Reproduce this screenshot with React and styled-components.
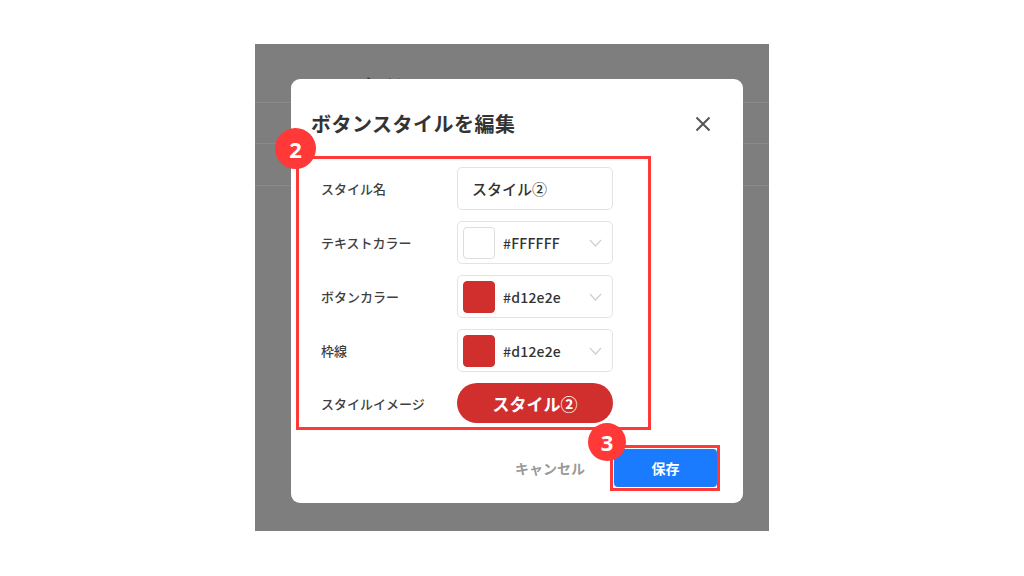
import React from "react";
import styled, { createGlobalStyle } from "styled-components";

const Global = createGlobalStyle`
  html, body { margin: 0; padding: 0; background: #ffffff; }
  body { font-family: "Noto Sans CJK JP", "Noto Sans", sans-serif; }
  #root { width: 1024px; height: 576px; }
`;

const Page = styled.div`
  width: 1024px;
  height: 576px;
  display: flex;
  align-items: flex-start;
  justify-content: center;
  padding-top: 44px;
  box-sizing: border-box;
  background: #ffffff;
`;

const Shot = styled.div`
  position: relative;
  width: 514px;
  height: 487px;
  background: #7e7e7e;
  box-sizing: border-box;
  padding: 35px 26px 0 36px;
  overflow: hidden;
`;

const Backdrop = styled.div`
  position: absolute;
  inset: 0;
  display: flex;
  flex-direction: column;
`;

const BackTitle = styled.div`
  position: absolute;
  left: 106px;
  top: 28px;
  font-size: 16px;
  font-weight: 700;
  color: #3c3c3c;
`;

const BackRow = styled.div`
  height: ${(p) => p.h}px;
  border-bottom: 1px solid #8a8a8a;
  flex: none;
`;

const Dialog = styled.div`
  position: relative;
  width: 452px;
  height: 424px;
  background: #ffffff;
  border-radius: 9px;
  box-sizing: border-box;
  display: flex;
  flex-direction: column;
`;

const Header = styled.div`
  display: flex;
  align-items: center;
  justify-content: space-between;
  height: 30px;
  margin: 30px 26px 28px 20px;
`;

const Title = styled.h2`
  margin: 0;
  font-size: 20px;
  font-weight: 700;
  color: #333333;
  letter-spacing: 0.5px;
  line-height: 30px;
`;

const CloseBtn = styled.div`
  width: 20px;
  height: 20px;
  display: flex;
  align-items: center;
  justify-content: center;
  margin-right: 4px;
`;

const Form = styled.div`
  position: relative;
  margin-left: 30px;
  width: 292px;
  display: flex;
  flex-direction: column;
  gap: 11px;
`;

const Row = styled.div`
  display: flex;
  align-items: center;
  height: ${(p) => (p.short ? 40 : 43)}px;
`;

const Label = styled.div`
  width: 136px;
  flex: none;
  font-size: 13px;
  font-weight: 500;
  color: #3f3f3f;
`;

const Field = styled.div`
  width: 156px;
  height: 43px;
  box-sizing: border-box;
  border: 1px solid #e3e3e3;
  border-radius: 5px;
  display: flex;
  align-items: center;
  padding: 0 ${(p) => (p.color ? "10px 0 5px" : "14px")};
  gap: 8px;
  font-size: ${(p) => (p.color ? 14 : 15)}px;
  font-weight: 500;
  color: #333333;
`;

const Swatch = styled.div`
  width: 32px;
  height: 32px;
  box-sizing: border-box;
  border-radius: 4px;
  background: ${(p) => p.c};
  border: 1px solid ${(p) => (p.c === "#ffffff" ? "#dddddd" : p.c)};
  flex: none;
`;

const Hex = styled.span`
  flex: 1;
  letter-spacing: 0.2px;
`;

const Preview = styled.div`
  width: 156px;
  height: 40px;
  border-radius: 20px;
  background: #d12e2e;
  color: #ffffff;
  font-size: 17px;
  font-weight: 700;
  display: flex;
  align-items: center;
  justify-content: center;
`;

const Highlight = styled.div`
  position: absolute;
  left: -25px;
  top: -11px;
  right: -38px;
  bottom: -7px;
  border: 3px solid #ff3838;
  pointer-events: none;
`;

const Badge = styled.div`
  position: absolute;
  left: ${(p) => p.l}px;
  top: ${(p) => p.t}px;
  width: ${(p) => p.d}px;
  height: ${(p) => p.d}px;
  border-radius: 50%;
  background: #ff3838;
  color: #ffffff;
  font-size: 22px;
  font-weight: 700;
  display: flex;
  align-items: center;
  justify-content: center;
  line-height: 1;
  font-family: "Noto Sans", "Noto Sans CJK JP", sans-serif;
`;

const Footer = styled.div`
  margin-top: auto;
  margin-bottom: 16px;
  margin-right: 26px;
  display: flex;
  justify-content: flex-end;
  align-items: center;
  gap: 29px;
`;

const Cancel = styled.div`
  font-size: 14px;
  font-weight: 700;
  color: #9a9a9a;
`;

const SaveWrap = styled.div`
  position: relative;
`;

const Save = styled.div`
  width: 103px;
  height: 38px;
  border-radius: 4px;
  background: #1a7bff;
  color: #ffffff;
  font-size: 14px;
  font-weight: 700;
  display: flex;
  align-items: center;
  justify-content: center;
`;

const SaveHighlight = styled.div`
  position: absolute;
  left: -4px;
  top: -4px;
  right: -3px;
  bottom: -4px;
  border: 3px solid #ff3838;
  pointer-events: none;
`;

const Chevron = () => (
  <svg width="13" height="8" viewBox="0 0 13 8" fill="none">
    <path d="M1 1l5.5 6L12 1" stroke="#cfcfcf" strokeWidth="1.2" />
  </svg>
);

const CloseIcon = () => (
  <svg width="16" height="16" viewBox="0 0 16 16" fill="none">
    <path d="M1.5 1.5l13 13M14.5 1.5l-13 13" stroke="#555555" strokeWidth="2" />
  </svg>
);

const colorRows = [
  { label: "テキストカラー", c: "#ffffff", hex: "#FFFFFF" },
  { label: "ボタンカラー", c: "#d12e2e", hex: "#d12e2e" },
  { label: "枠線", c: "#d12e2e", hex: "#d12e2e" },
];

export default function App() {
  return (
    <>
      <Global />
      <Page>
        <Shot>
          <Backdrop>
            <BackRow h={58} />
            <BackRow h={40} />
            <BackRow h={41} />
            <BackTitle>タイトル</BackTitle>
          </Backdrop>
          <Dialog>
            <Header>
              <Title>ボタンスタイルを編集</Title>
              <CloseBtn>
                <CloseIcon />
              </CloseBtn>
            </Header>
            <Form>
              <Row>
                <Label>スタイル名</Label>
                <Field>スタイル②</Field>
              </Row>
              {colorRows.map((r) => (
                <Row key={r.label}>
                  <Label>{r.label}</Label>
                  <Field color="1">
                    <Swatch c={r.c} />
                    <Hex>{r.hex}</Hex>
                    <Chevron />
                  </Field>
                </Row>
              ))}
              <Row short>
                <Label>スタイルイメージ</Label>
                <Preview>スタイル②</Preview>
              </Row>
              <Highlight>
                <Badge l={-24} t={-31} d={41}>2</Badge>
              </Highlight>
            </Form>
            <Footer>
              <Cancel>キャンセル</Cancel>
              <SaveWrap>
                <Save>保存</Save>
                <SaveHighlight>
                  <Badge l={-25} t={-25} d={38}>3</Badge>
                </SaveHighlight>
              </SaveWrap>
            </Footer>
          </Dialog>
        </Shot>
      </Page>
    </>
  );
}
